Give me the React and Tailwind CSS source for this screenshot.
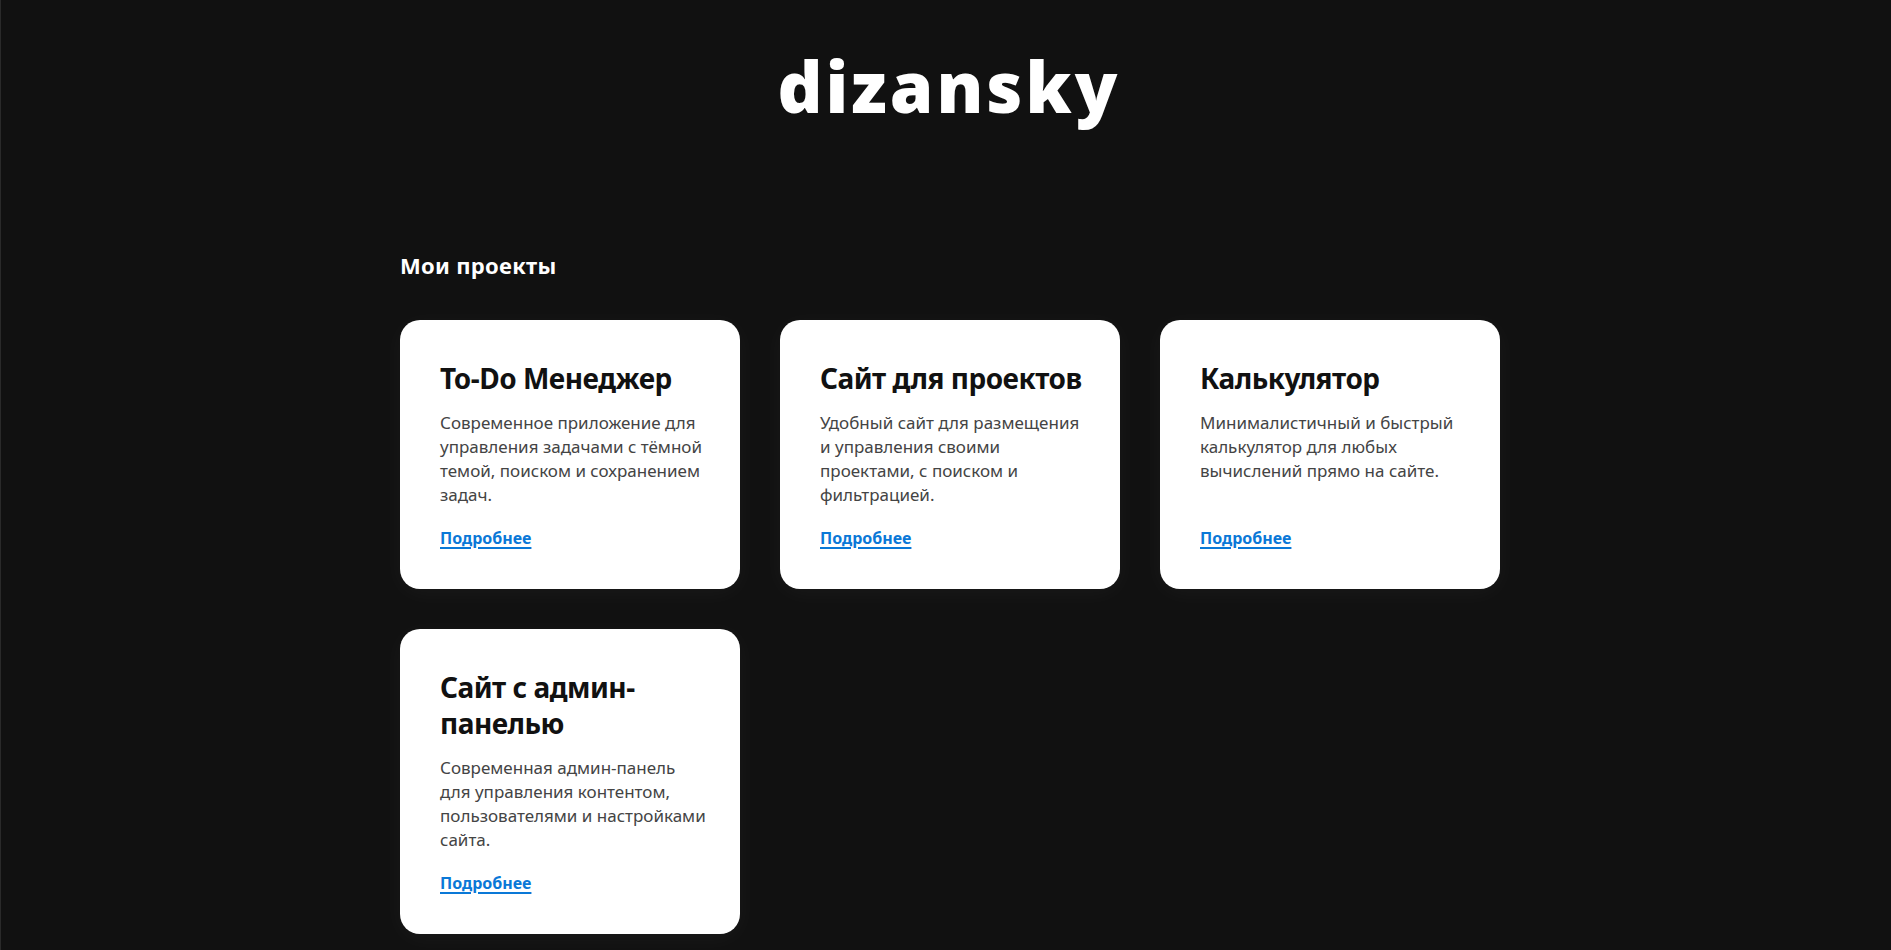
import React from 'react';

const projects = [
  {
    id: 1,
    title: 'To-Do Менеджер',
    description: 'Современное приложение для управления задачами с тёмной темой, поиском и сохранением задач.',
  },
  {
    id: 2,
    title: 'Сайт для проектов',
    description: 'Удобный сайт для размещения и управления своими проектами, с поиском и фильтрацией.',
  },
  {
    id: 3,
    title: 'Калькулятор',
    description: 'Минималистичный и быстрый калькулятор для любых вычислений прямо на сайте.',
  },
  {
    id: 4,
    title: 'Сайт с админ-панелью',
    description: 'Современная админ-панель для управления контентом, пользователями и настройками сайта.',
  },
];

const ProjectCard = ({ project }) => (
  <div className="bg-white rounded-[20px] pt-10 pb-10 pl-10 pr-[34px] flex flex-col shadow-[0_4px_24px_rgba(255,255,255,0.04)]">
    <h3 className="text-[28px] leading-[36px] font-bold tracking-[-0.5px] text-[#111] mb-[15px]">{project.title}</h3>
    <p className="text-[17px] leading-[24px] text-[#444] mb-5">{project.description}</p>
    <a
      href="#"
      className="mt-auto self-start text-[16px] leading-[22px] font-bold text-[#0a78d7] underline decoration-2 underline-offset-[3px]"
    >
      Подробнее
    </a>
  </div>
);

const App = () => {
  return (
    <div className="min-h-screen bg-[#111111] border-l border-[#2a2a2a] font-['Noto_Sans',sans-serif] text-white">
      <header className="pt-[42px] pb-[120px] text-center">
        <h1 className="text-[70px] leading-[88px] font-black tracking-[3px] pl-[6px]">dizansky</h1>
      </header>

      <main className="w-[1100px] mx-auto translate-x-[4px]">
        <h2 className="text-[22px] leading-[30px] font-bold tracking-[0.3px] mb-10">Мои проекты</h2>
        <div className="grid grid-cols-3 gap-10">
          {projects.map((project) => (
            <ProjectCard key={project.id} project={project} />
          ))}
        </div>
      </main>
      <div className="h-16"></div>
    </div>
  );
};

export default App;
